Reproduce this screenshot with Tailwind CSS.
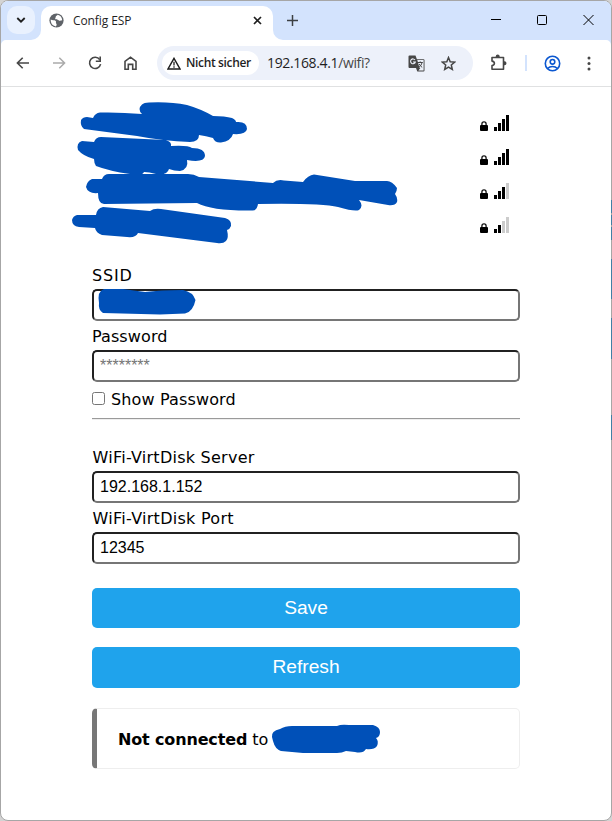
<!DOCTYPE html>
<html lang="de">
<head>
<meta charset="utf-8">
<title>Config ESP</title>
<script src="https://cdn.jsdelivr.net/npm/@tailwindcss/browser@4"></script>
</head>
<body class="w-[612px] h-[821px] overflow-hidden bg-[#d3d3d3]">
<div class="relative w-[612px] h-[821px] border border-[#a6a6a6] rounded-[8px] overflow-hidden bg-white flex flex-col font-['Open_Sans',sans-serif]">

  <!-- Tab strip -->
  <div class="h-[39px] shrink-0 bg-[#d3e3fd] flex items-start">
    <button class="ml-[6px] mt-[5px] size-7 rounded-[10px] bg-[#e9f1fe] flex items-center justify-center">
      <svg width="10" height="8" viewBox="0 0 10 8" fill="none" stroke="#1f1f1f" stroke-width="1.8"><path d="M1.3 2 5 5.7 8.7 2"/></svg>
    </button>
    <div class="relative ml-[6px] mt-[5px] h-[34px] w-[232px] bg-white rounded-t-[10px] flex items-start pt-[7px] pl-[8px]">
      <svg class="absolute -left-[10px] bottom-0" width="10" height="10"><path d="M10 0v10H0A10 10 0 0 0 10 0Z" fill="#fff"/></svg>
      <svg class="absolute -right-[10px] bottom-0" width="10" height="10"><path d="M0 0v10h10A10 10 0 0 1 0 0Z" fill="#fff"/></svg>
      <svg width="15" height="15" viewBox="0 0 15 15"><circle cx="7.5" cy="7.5" r="7.1" fill="#5f6368"/><path d="M1.7 6.6c1.4 1.3 3.8.3 5 1.3 1 .9-.3 1.6.5 2.5.9.8.4 2-.4 3C3.700 13 1.500 10.300 1.700 6.600ZM8.700 1.800c-.4 1-2.100 1-2 2.100.1 1-.9 1.200-.4 2.100.7.9 2.500.2 3.300 1.200.6.8 2.300.5 3.600 0C13.100 4.300 11.200 2.300 8.700 1.800Z" fill="#fff"/></svg>
      <span class="ml-[9px] mt-px text-[12px] leading-[14px] text-[#1f1f1f] w-[170px] whitespace-nowrap tracking-[-0.1px]">Config ESP</span>
      <svg class="ml-[10px] mt-[3px]" width="9" height="9" viewBox="0 0 9 9" stroke="#1f1f1f" stroke-width="1.7"><path d="m1 1 7 7M8 1 1 8"/></svg>
    </div>
    <svg class="ml-[14px] mt-[14px]" width="11" height="11" viewBox="0 0 11 11" stroke="#3c4043" stroke-width="1.500"><path d="M5.500 0v11M0 5.500h11"/></svg>
    <svg class="ml-auto mr-[17px] mt-[13px]" width="103" height="12" viewBox="0 0 103 12" fill="none" stroke="#000"><path d="M0 5.500h10"/><rect x="46.500" y="1.500" width="9" height="9" rx="1"/><path d="m92.500 1 10 10M102.500 1l-10 10"/></svg>
  </div>

  <!-- Toolbar -->
  <div class="relative h-[47px] shrink-0 bg-white flex items-center border-b border-[#e0e1e2]">
    <svg class="absolute left-0 top-0" width="5" height="5"><path d="M0 0h5A5 5 0 0 0 0 5Z" fill="#d3e3fd"/></svg>
    <svg class="absolute right-0 top-0" width="5" height="5"><path d="M5 0H0A5 5 0 0 1 5 5Z" fill="#d3e3fd"/></svg>
    <svg class="ml-[15px]" width="14" height="12" viewBox="0 0 14 12" fill="none" stroke="#474747" stroke-width="1.600"><path d="M13 6H1.500M6.700.7 1.400 6l5.300 5.300"/></svg>
    <svg class="ml-[22px]" width="14" height="12" viewBox="0 0 14 12" fill="none" stroke="#aaa" stroke-width="1.500"><path d="M1 6h11.500M7.300.7 12.600 6l-5.300 5.300"/></svg>
    <svg class="ml-[22px]" width="14" height="14" viewBox="0 0 14 14"><path d="M12.600 8.100A5.600 5.600 0 1 1 11.700 3.600" fill="none" stroke="#474747" stroke-width="1.600"/><path d="M13 .6v5.400H7.800V4.400h3.600V.6Z" fill="#474747"/></svg>
    <svg class="ml-[22px] mr-px" width="13" height="14" viewBox="0 0 13 14" fill="none" stroke="#474747" stroke-width="1.600"><path d="M1 5.400 6.500 1.200 12 5.400v7.800H8.700V8.400H4.300v4.800H1Z"/></svg>
    <div class="ml-[19px] w-[316px] h-[34px] rounded-full bg-[#edf1fa] flex items-center">
      <div class="ml-[5px] w-[97px] h-6 rounded-full bg-white flex items-center">
        <svg class="ml-[5px]" width="14" height="13" viewBox="0 0 14 13"><path d="M7 1.300 13 12H1Z" fill="none" stroke="#1f1f1f" stroke-width="1.400"/><path d="M7 4.800v3.700M7 9.300v1.400" stroke="#1f1f1f" stroke-width="1.300"/></svg>
        <span class="ml-[5px] text-[12px] leading-4 font-semibold text-[#1f1f1f] whitespace-nowrap tracking-[-0.35px]">Nicht sicher</span>
      </div>
      <span class="ml-[8px] w-[140px] text-[14px] leading-5 text-[#1f1f1f] whitespace-nowrap tracking-[-0.36px]">192.168.4.1<span class="text-[#474747]">/wifi?</span></span>
      <svg class="ml-px" width="17" height="17" viewBox="0 0 17 17"><path d="M1.500.5h6l1.400 3.700h6.600q1 0 1 1v10.300q0 1-1 1H9.300L8 13H1.500q-1 0-1-1V1.500q0-1 1-1Z" fill="#474747"/><path d="M9.300 5.100h6.300v10.500h-5.200l2-2.600h-.9Z" fill="#edf1fa"/><path d="M7 5A2.400 2.400 0 1 0 7.300 7H5" fill="none" stroke="#edf1fa" stroke-width="1.100"/><path d="M9.800 7.500h5M12.200 6.400v1.100M14 7.500c-.4 2-1.600 3.700-3 4.800M11.200 9c.6 1.300 1.700 2.500 3 3.400" fill="none" stroke="#474747"/></svg>
      <svg class="ml-[16px]" width="15" height="15" viewBox="0 0 15 15" fill="none" stroke="#474747" stroke-width="1.500"><path d="m7.500 1.500 1.700 4.200 4.500.4-3.400 2.900 1 4.400-3.800-2.300-3.800 2.300 1-4.400-3.400-2.900 4.500-.4Z"/></svg>
    </div>
    <svg class="ml-[17px] mr-px -mt-px" width="17" height="17" viewBox="0 0 17 17"><path d="M2 3.500h11.500v11.700H2v-3.600c3.200-.5 3.200-4 0-4.500Z" fill="none" stroke="#474747" stroke-width="1.600" stroke-linejoin="round"/><path d="M5.700 3V2.400a2 2 0 0 1 4 0V3ZM14 7.300h.5a2 2 0 0 1 0 4H14Z" fill="#474747"/></svg>
    <div class="ml-[17px] w-[2px] h-4 bg-[#d3e3fd]"></div>
    <svg class="ml-[17px]" width="17" height="17" viewBox="0 0 17 17" fill="none" stroke="#0b57d0" stroke-width="1.600"><circle cx="8.500" cy="8.500" r="7.200"/><circle cx="8.500" cy="6.800" r="2.300"/><path d="M3.500 13.500c2.700-2.700 7.300-2.700 10 0"/></svg>
    <svg class="ml-[26px]" width="4" height="15" viewBox="0 0 4 15" fill="#474747"><circle cx="2" cy="2" r="1.500"/><circle cx="2" cy="7.500" r="1.500"/><circle cx="2" cy="13" r="1.500"/></svg>
  </div>

  <!-- Page -->
  <main class="pt-[19px] px-[91px] text-[16px] text-black font-[Verdana,'DejaVu_Sans',sans-serif]">
    <ul class="mb-[18px]">
      <li class="h-[34px] flex justify-end items-end pb-[9px] pr-[11px]"><svg width="29" height="16" viewBox="0 0 29 16"><path d="M1.900 10V8.900a2.100 2.100 0 0 1 4.200 0V10" fill="none" stroke="#111" stroke-width="1.300"/><rect y="10" width="8" height="6" rx="1"/><path d="M14 12h3v4h-3zM18 8h3v8h-3zM22 4h3v12h-3zM26 0h3v16h-3z"/></svg></li>
      <li class="h-[34px] flex justify-end items-end pb-[9px] pr-[11px]"><svg width="29" height="16" viewBox="0 0 29 16"><path d="M1.900 10V8.900a2.100 2.100 0 0 1 4.200 0V10" fill="none" stroke="#111" stroke-width="1.300"/><rect y="10" width="8" height="6" rx="1"/><path d="M14 12h3v4h-3zM18 8h3v8h-3zM22 4h3v12h-3zM26 0h3v16h-3z"/></svg></li>
      <li class="h-[34px] flex justify-end items-end pb-[9px] pr-[11px]"><svg width="29" height="16" viewBox="0 0 29 16"><path d="M1.900 10V8.900a2.100 2.100 0 0 1 4.200 0V10" fill="none" stroke="#111" stroke-width="1.300"/><rect y="10" width="8" height="6" rx="1"/><path d="M14 12h3v4h-3zM18 8h3v8h-3zM22 4h3v12h-3z"/><path d="M26 0h3v16h-3z" fill="#ccc"/></svg></li>
      <li class="h-[34px] flex justify-end items-end pb-[9px] pr-[11px]"><svg width="29" height="16" viewBox="0 0 29 16"><path d="M1.900 10V8.900a2.100 2.100 0 0 1 4.200 0V10" fill="none" stroke="#111" stroke-width="1.300"/><rect y="10" width="8" height="6" rx="1"/><path d="M14 12h3v4h-3zM18 8h3v8h-3z"/><path d="M22 4h3v12h-3zM26 0h3v16h-3z" fill="#ccc"/></svg></li>
    </ul>

    <label class="block h-[29px] leading-[31px] tracking-[0.8px]">SSID</label>
    <input class="block w-full h-8 rounded-[5px] border-2 border-t-[#212121] border-l-[#212121] border-r-[#767676] border-b-[#767676] px-[5px] bg-white">
    <label class="block h-[29px] leading-[31px] tracking-[0.1px]">Password</label>
    <input placeholder="********" class="block w-full h-8 rounded-[5px] border-2 border-t-[#212121] border-l-[#212121] border-r-[#767676] border-b-[#767676] pl-[6px] pr-[5px] bg-white font-['Liberation_Sans',sans-serif] placeholder:text-[#757575]">
    <div class="h-[36px] flex items-start">
      <span class="mt-[10px] size-[13px] border border-[#767676] rounded-[2.5px]"></span>
      <span class="ml-[6px] mt-[6px] leading-6 tracking-[0.14px]">Show Password</span>
    </div>
    <div class="h-[2px] border-t border-t-[#9a9a9a] border-b border-b-[#eee]"></div>
    <label class="block mt-[22px] h-[29px] leading-[31px] pl-[0.5px] tracking-[0.25px]">WiFi-VirtDisk Server</label>
    <input value="192.168.1.152" class="block w-full h-8 rounded-[5px] border-2 border-t-[#212121] border-l-[#212121] border-r-[#767676] border-b-[#767676] pl-[6px] pr-[5px] bg-white font-['Liberation_Sans',sans-serif]">
    <label class="block h-[29px] leading-[31px] pl-[0.5px] tracking-[0.28px]">WiFi-VirtDisk Port</label>
    <input value="12345" class="block w-full h-8 rounded-[5px] border-2 border-t-[#212121] border-l-[#212121] border-r-[#767676] border-b-[#767676] pl-[6px] pr-[5px] bg-white font-['Liberation_Sans',sans-serif]">
    <button class="block mt-[24px] w-full h-[40px] rounded-[5px] bg-[#1fa3ec] text-white text-[19.200px] leading-[40px] font-['Liberation_Sans',sans-serif]">Save</button>
    <button class="block mt-[19px] w-full h-[41px] rounded-[5px] bg-[#1fa3ec] text-white text-[19.200px] leading-[40px] pb-px font-['Liberation_Sans',sans-serif]">Refresh</button>
    <div class="mt-[20px] h-[61px] rounded-[5px] border border-[#eee] border-l-[5px] border-l-[#777] pl-[21px] leading-[61px] whitespace-nowrap"><b class="tracking-[-0.15px]">Not connected</b> to</div>
  </main>

  <!-- Marker strokes over the private values -->
  <svg class="absolute -left-px -top-px pointer-events-none" width="612" height="821" viewBox="0 0 612 821" fill="#0050b8">
    <path d="M87 117 93 118Q95 113 100 112.500Q120 112 142 114Q137 109 142 104.500Q144 102.500 149 102.500Q170 101.500 187 105Q201 109 213 116Q225 116 232 118Q236 120 236 122Q247 121 247 129Q246 135 233 134Q231 141 221 142.500Q215 143 213 138Q206 136 199 135Q199 142 190 142Q163 141 137 136L84 129Q80 126 81 120Q83 117 87 117Z"/>
    <path d="M82 141 94 142Q96 137 101 137L166 140Q172 142 171 146Q188 145 192 148Q205 148 205 156Q204 163 187 160Q189 169 180 171Q174 171 169 169Q167 176 156 174Q149 172 144 172Q142 177 130 174Q109 171 96 166Q94 163 94 159Q83 156 78 150Q76 143 82 141Z"/>
    <path d="M92 179 102 179Q104 174 109 174L188 174Q194 174 199 177L273 183Q277 179 284 180.500L303 182Q308 175 314 174.500L355 181 387 181Q392 181 397 188Q397 191 395 194Q398 198 397 202Q395 206 388 205L359 200Q364 206 359 210Q355 212 338 207Q320 203 258 204Q257 211 252 210.500Q212 211 197 203L104 204Q98 204 98 193Q88 194 86 187Q87 181 92 179Z"/>
    <path d="M77 215 96 215Q97 208 103 207L150 211Q154 208 161 209L225 218Q232 220 231 226Q230 229 227 230Q229 238 226 241Q223 244 217 243L138 233Q136 238 127 237L102 235Q96 233 95 228L79 227Q72 226 72 220Q73 216 77 215Z"/>
    <path d="M104 289 123 289 145 292Q160 290 183 290Q193 292 195.500 300Q193 312 185 313.500L160 314.500 103 313Q98 310 99 303Q97 291 104 289Z"/>
    <path d="M272 737Q271 731 280 729Q285 726 292 726L337 726Q341 724 349 725L373 725Q380 727 380 732Q380 737 376 738Q379 741 377 746Q374 750 366 749Q363 754 355 752L346 751Q342 753 337 753L303 753 281 751Q275 749 273 741Z"/>
  </svg>
</div>
<!-- Sliver of the windows behind the right edge -->
<div class="absolute right-0 top-[200px] w-px h-[240px] flex flex-col">
  <span class="h-[13px] bg-[#4180a5]"></span><span class="mt-[2px] h-[10px] bg-[#4180a5]"></span><span class="mt-[2px] h-[13px] bg-[#4180a5]"></span>
  <span class="mt-[19px] h-[40px] bg-[#4180a5]"></span><span class="mt-[19px] h-[41px] bg-[#4180a5]"></span><span class="mt-[56px] h-[25px] bg-[#4180a5]"></span>
</div>
</body>
</html>
